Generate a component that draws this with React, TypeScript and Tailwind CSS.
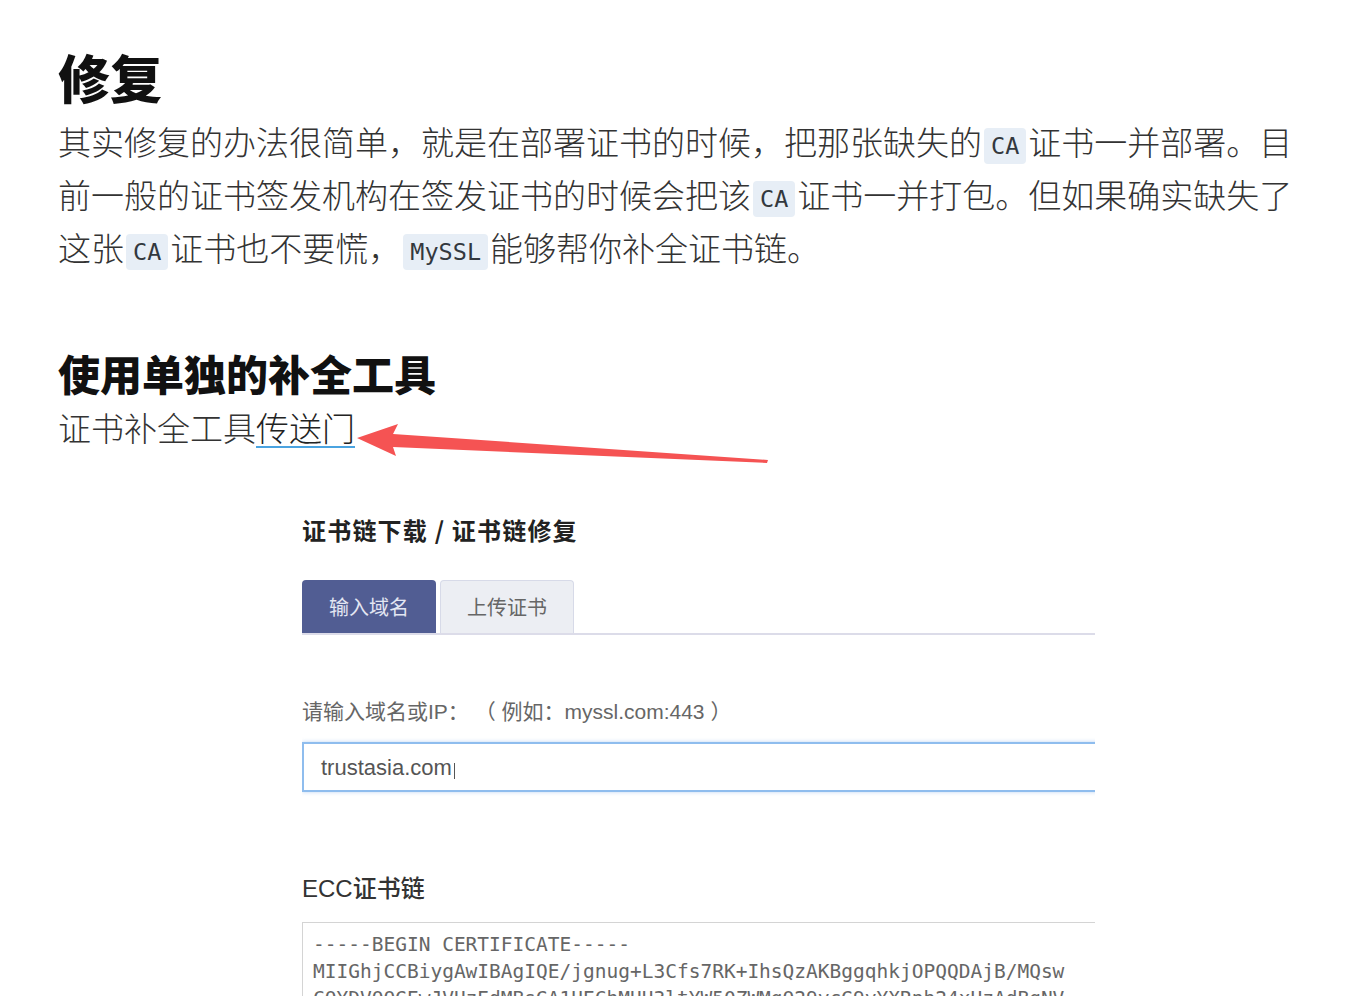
import React from "react";

const cjk = "font-['Noto_Sans_CJK_SC',sans-serif]";
const mono = "font-['DejaVu_Sans_Mono','Liberation_Mono',monospace]";
const ui = "font-['Liberation_Sans','Noto_Sans_CJK_SC',sans-serif]";

const Code = ({ children }: { children: React.ReactNode }) => (
  <code
    className={`${mono} mx-[2px] rounded-[4px] bg-[#e7eef6] px-[7px] py-[4px] align-[1px] text-[23.5px] leading-none text-[#33383e]`}
  >
    {children}
  </code>
);

const certLines = [
  "-----BEGIN CERTIFICATE-----",
  "MIIGhjCCBiygAwIBAgIQE/jgnug+L3Cfs7RK+IhsQzAKBggqhkjOPQQDAjB/MQsw",
  "CQYDVQQGEwJVUzEdMBsGA1UEChMUU3ltYW50ZWMgQ29ycG9yYXRpb24xHzAdBgNV",
];

const Arrow = () => (
  <svg
    className="pointer-events-none absolute left-0 top-0"
    width="1350"
    height="996"
    viewBox="0 0 1350 996"
  >
    <polygon
      points="357,438 398,424 393,434 768,460 767,463 393,447 396,456"
      fill="#f55353"
    />
  </svg>
);

const App = () => {
  return (
    <div className={`relative h-[996px] overflow-hidden bg-white ${cjk}`}>
      <div className="pl-[58px] pt-[45px]">
        <h1 className="text-[52px] font-black leading-[64px] text-[#111]">
          修复
        </h1>
        <p className="mt-[6px] text-[33px] font-light leading-[53px] text-[#333]">
          其实修复的办法很简单，就是在部署证书的时候，把那张缺失的<Code>CA</Code>证书一并部署。目
          <br />
          前一般的证书签发机构在签发证书的时候会把该<Code>CA</Code>证书一并打包。但如果确实缺失了
          <br />
          这张<Code>CA</Code>证书也不要慌，<Code>MySSL</Code>能够帮你补全证书链。
        </p>

        <h2 className="mt-[71px] text-[42px] font-black leading-[56px] text-[#111]">
          使用单独的补全工具
        </h2>
        <p className="text-[33px] font-light leading-[53px] text-[#333]">
          证书补全工具
          <a className="text-[#222] underline decoration-[#4aa3e0] decoration-2 underline-offset-[5px]">
            传送门
          </a>
        </p>

        <div className="ml-[244px] mt-[60px] w-[793px] overflow-hidden">
          <div className="w-[900px]">
            <div className={`${cjk} text-[24px] font-bold leading-[32px] tracking-[1.2px] text-[#222]`}>
              证书链下载 / 证书链修复
            </div>

            <div className={`${cjk} mt-[34px] flex gap-[4px] border-b-2 border-[#dcdce9]`}>
              <div className="flex h-[53px] w-[134px] items-center justify-center rounded-t-[4px] bg-[#515d93] text-[20px] text-[#e3e6f2]">
                输入域名
              </div>
              <div className="flex h-[53px] w-[134px] items-center justify-center rounded-t-[4px] border border-b-0 border-[#d7dae8] bg-[#eceef3] text-[20px] text-[#666]">
                上传证书
              </div>
            </div>

            <div className={`${ui} mt-[63px] text-[21px] leading-[28px] text-[#666]`}>
              请输入域名或IP： （ 例如：myssl.com:443 ）
            </div>

            <div
              className={`${ui} mt-[16px] flex h-[50px] items-center border-2 border-[#8fbdee] pl-[17px] text-[22px] text-[#555] shadow-[0_0_4px_rgba(110,165,230,0.45)]`}
            >
              trustasia.com
              <span className="ml-[2px] mt-[8px] h-[16px] w-px bg-[#555]" />
            </div>

            <div className={`${ui} mt-[81px] text-[24px] font-medium leading-[32px] text-[#333]`}>
              ECC证书链
            </div>

            <div className="mt-[17px] h-[120px] border border-[#d4d4d4] pl-[10px] pt-[8px]">
              {certLines.map((line) => (
                <div
                  key={line}
                  className={`${mono} whitespace-pre text-[19.5px] leading-[27px] text-[#666]`}
                >
                  {line}
                </div>
              ))}
            </div>
          </div>
        </div>
      </div>
      <Arrow />
    </div>
  );
};

export default App;
